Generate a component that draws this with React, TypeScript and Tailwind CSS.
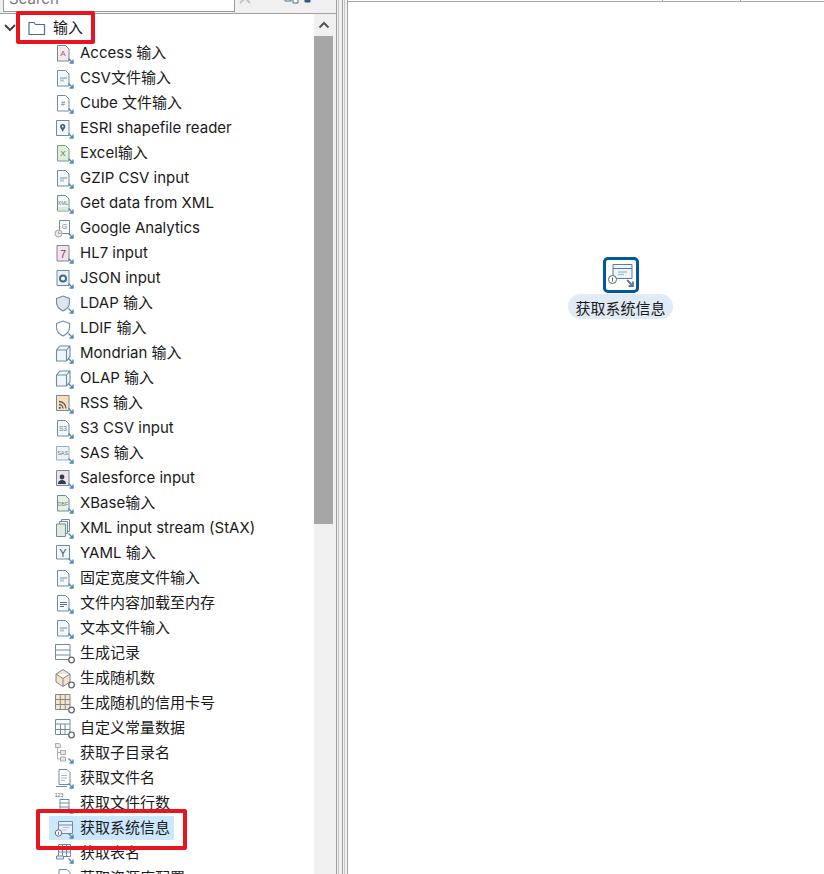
import React from 'react';

const STROKE = '#6f8ba3';

// little blue arrow that every step icon has in its corner
const Arrow = () => (
  <path d="M14.5 16.5l4.5 4.500m0-3.500v3.500h-3.500" fill="none" stroke="#4d86b0" strokeWidth="1.300" />
);

const Gear = () => (
  <circle cx="17.500" cy="18" r="2.800" fill="#fff" stroke="#667" strokeWidth="1.300" />
);

const Doc = ({ fill = '#fff', stroke = STROKE }: { fill?: string; stroke?: string }) => (
  <path d="M3.500 3.500h8l3.500 3.500v12h-11.500z" fill={fill} stroke={stroke} strokeWidth="1" />
);

const Letter = ({ t, x = 9, y = 14, size = 6, color = '#667788' }: { t: string; x?: number; y?: number; size?: number; color?: string }) => (
  <text x={x} y={y} fontSize={size} textAnchor="middle" fill={color} fontFamily="'Liberation Sans', sans-serif">
    {t}
  </text>
);

const Lines = () => (
  <path d="M6 11h7M6 13.500h4" stroke="#b4c2ce" strokeWidth="1.800" fill="none" />
);

const Shield = ({ fill }: { fill: string }) => (
  <path d="M2.500 6.500l6.500-2.500 6.500 2.500v4c0 4.500-3.500 7-6.500 8.500-3-1.500-6.500-4-6.500-8.500z" fill={fill} stroke={STROKE} strokeWidth="1.100" />
);

const Cube = () => (
  <path d="M2.500 8l3.500-4h10v10.500l-3.500 4.500h-10zM2.500 8h10v11M12.500 8l3.500-4" fill="#eef6fc" stroke={STROKE} strokeWidth="1.100" />
);

const icons: Record<string, React.ReactNode> = {
  access: <><Doc fill="#fbe6ec" /><Letter t="A" y={14} size={8} /><Arrow /></>,
  csv: <><Doc fill="#f4f8fb" /><Lines /><Arrow /></>,
  cube: <><Doc /><Letter t="#" size={8} /><Arrow /></>,
  esri: <><path d="M2.500 3.500h12.500v15h-12.500z" fill="#f4f8fb" stroke={STROKE} /><circle cx="8.700" cy="9.500" r="2.600" fill="#3f5f7d" /><path d="M6.800 11l1.900 4 1.900-4z" fill="#3f5f7d" /><circle cx="8.700" cy="9.500" r="0.900" fill="#fff" /><Arrow /></>,
  excel: <><Doc fill="#dfefd9" stroke="#7d9c86" /><Letter t="X" size={8} color="#55785c" /><Arrow /></>,
  xml: <><Doc fill="#f2f8f0" /><path d="M4 15h10.500v3.500h-10.500z" fill="#d8ebd0" /><Letter t="XML" size={5} y={13} /><Arrow /></>,
  google: <><path d="M5.500 3.500h10v13h-10z" fill="#fff" stroke={STROKE} /><Letter t="G" x={10.500} y={11.500} size={7} /><circle cx="4.500" cy="16.500" r="3.500" fill="#f7e4da" stroke="#98a4ae" /><path d="M4.500 14.500v2h2" stroke="#98a4ae" fill="none" /><Arrow /></>,
  hl7: <><path d="M3 3.500h12v15.500h-12z" fill="#fae0e8" stroke={STROKE} /><Letter t="7" y={15.500} size={11} color="#556" /><Arrow /></>,
  json: <><path d="M3 3.500h12v15h-12z" fill="#e6f1f9" stroke={STROKE} /><circle cx="9" cy="11.500" r="3" fill="#fff" stroke="#4a6782" strokeWidth="2" /><Arrow /></>,
  ldap: <><Shield fill="#dfe5ea" /><Arrow /></>,
  ldif: <><Shield fill="#fff" /><Arrow /></>,
  cubeBox: <><Cube /><Arrow /></>,
  rss: <><path d="M2.500 3.500h12.500v15h-12.500z" fill="#fadfb8" stroke={STROKE} /><path d="M5 9.500a7 7 0 0 1 7 7M5 12.500a4 4 0 0 1 4 4" fill="none" stroke="#55606c" strokeWidth="1.300" /><circle cx="5.800" cy="15.800" r="1.100" fill="#55606c" /><Arrow /></>,
  s3: <><Doc fill="#f4f8fb" /><Letter t="S3" size={6.500} /><Arrow /></>,
  sas: <><path d="M2.500 4.500h12.500v13.500h-12.500z" fill="#eef3f8" stroke="#9db0c0" /><Letter t="SAS" x={8.700} size={5.500} y={13} /><Arrow /></>,
  sales: <><path d="M2.500 3.500h12.500v15h-12.500z" fill="#f0e2e8" stroke={STROKE} /><circle cx="8" cy="10" r="2.400" fill="#333f4c" /><path d="M4 17c0-3 1.800-4 4-4s4 1 4 4z" fill="#333f4c" /><Arrow /></>,
  xbase: <><Doc fill="#e6f2e1" /><Letter t="DBF" size={5} /><Arrow /></>,
  stax: <><path d="M7.500 2.500h8v12h-8z" fill="#eef4ea" stroke={STROKE} /><path d="M5.500 4.500h8v12h-8z" fill="#eef4ea" stroke={STROKE} /><path d="M2.500 7h9v12.500h-9z" fill="#dfecd8" stroke={STROKE} /><Arrow /></>,
  yaml: <><path d="M2.500 3.500h13v13.500h-13z" fill="#f2f7fb" stroke={STROKE} /><Letter t="Y" y={15} size={11} color="#44586a" /><Arrow /></>,
  fixed: <><Doc fill="#f4f8fb" /><Lines /><Arrow /></>,
  mem: <><Doc fill="#f4f8fb" /><path d="M6 10.500h7M6 12.500h7M6 14.500h4" stroke="#5a6f82" strokeWidth="1.100" /><Arrow /></>,
  rows: <><path d="M1.500 2.500h14.500v15h-14.500zM1.500 8h14.500M1.500 13h14.500" fill="#fff" stroke={STROKE} /><Gear /></>,
  random: <><path d="M2 7l7-4.500 7 4.500v8l-7 4.500-7-4.500zM2 7l7 4.500 7-4.500M9 11.500v8" fill="#f6e2c6" stroke="#7d8a96" /><Gear /></>,
  card: <><path d="M1.500 2.500h14.500v15h-14.500zM1.500 7.500h14.500M1.500 12.500h14.500M6.300 2.500v15M11.200 2.500v15" fill="#f9e5c8" stroke="#7d8a96" /><Gear /></>,
  table: <><path d="M1.500 2.500h14.500v15h-14.500zM1.500 7h14.500M1.500 12.500h14.500M6.500 7v10.500M11 7v10.500" fill="#fff" stroke={STROKE} /><Gear /></>,
  folders: <><path d="M1.500 1.500h4l1 1.500v2.500h-5zM6.500 8.500h5v4h-5zM6.500 15h5v4h-5z" fill="#f8e8c8" stroke="#98a6b2" strokeWidth="0.900" /><path d="M3.500 5.500v11.500h3M3.500 10.500h3" stroke="#98a6b2" fill="none" strokeWidth="0.900" /><Arrow /></>,
  file: <><path d="M5 2.500h8l3 3v12h-11z" fill="#fff" stroke={STROKE} /><path d="M7 8.500h6M7 11h6M7 13.500h4" stroke="#a9b8c5" /><path d="M2 19.500h11" stroke={STROKE} /><Arrow /></>,
  lines: <><Letter t="123" x={5} y={5} size={5} color="#556" /><path d="M6 7.500h9v11.500h-9zM6 11h9M6 15h9" fill="#fff" stroke={STROKE} /><Arrow /></>,
  sys: <><path d="M4.500 4.500h14v12h-14zM4.500 8h14" fill="#e9f2f9" stroke={STROKE} /><path d="M8.500 10.500h7M8.500 13h4" stroke="#b4c2ce" strokeWidth="1.200" /><circle cx="4.500" cy="16" r="3.200" fill="#fff" stroke="#667" /><path d="M4.500 14.800v2.800" stroke="#667" /><Arrow /></>,
  tables: <><path d="M4.500 2.500h12v12h-12zM4.500 6h12M4.500 10h12M8.500 2.500v12M12.500 2.500v12" fill="#fff" stroke={STROKE} /><path d="M2.500 14h7v3h-7z" fill="#e8eef4" stroke={STROKE} /><Arrow /></>,
};

const StepIcon = ({ kind }: { kind: string }) => (
  <svg width="22" height="22" viewBox="0 0 22 22" className="shrink-0">
    {icons[kind]}
  </svg>
);

const steps: [string, string][] = [
  ['access', 'Access 输入'],
  ['csv', 'CSV文件输入'],
  ['cube', 'Cube 文件输入'],
  ['esri', 'ESRI shapefile reader'],
  ['excel', 'Excel输入'],
  ['csv', 'GZIP CSV input'],
  ['xml', 'Get data from XML'],
  ['google', 'Google Analytics'],
  ['hl7', 'HL7 input'],
  ['json', 'JSON input'],
  ['ldap', 'LDAP 输入'],
  ['ldif', 'LDIF 输入'],
  ['cubeBox', 'Mondrian 输入'],
  ['cubeBox', 'OLAP 输入'],
  ['rss', 'RSS 输入'],
  ['s3', 'S3 CSV input'],
  ['sas', 'SAS 输入'],
  ['sales', 'Salesforce input'],
  ['xbase', 'XBase输入'],
  ['stax', 'XML input stream (StAX)'],
  ['yaml', 'YAML 输入'],
  ['fixed', '固定宽度文件输入'],
  ['mem', '文件内容加载至内存'],
  ['fixed', '文本文件输入'],
  ['rows', '生成记录'],
  ['random', '生成随机数'],
  ['card', '生成随机的信用卡号'],
  ['table', '自定义常量数据'],
  ['folders', '获取子目录名'],
  ['file', '获取文件名'],
  ['lines', '获取文件行数'],
  ['sys', '获取系统信息'],
  ['tables', '获取表名'],
  ['file', '获取资源库配置'],
];

const App = () => {
  return (
    <div
      className="relative flex h-[874px] w-[824px] overflow-hidden bg-white text-[15px] text-[#1a1a1a]"
      style={{ fontFamily: "Inter, 'Noto Sans CJK SC', sans-serif" }}
    >
      {/* left palette */}
      <div className="flex h-full w-[336px] shrink-0 flex-col">
        <div className="flex h-[14px] shrink-0 items-end overflow-hidden border-b border-[#a0a0a0] bg-[#f0f0f0] pb-[1px] pl-[3px]">
          <div className="flex h-[26px] w-[232px] shrink-0 items-center border border-[#9a9a9a] bg-white pl-[5px] text-[15px] text-[#777]">
            Search
          </div>
          <svg width="14" height="5" viewBox="0 0 14 5" className="mb-[8px] ml-[4px] shrink-0">
            <path d="M1 -6l10 10M11 -6l-10 10" stroke="#c4c4c4" strokeWidth="2" />
          </svg>
          <svg width="16" height="5" viewBox="0 0 16 5" className="mb-[8px] ml-[31px] shrink-0">
            <path d="M1 -4h6v6h-6zM9 -3h5v7h-5z" fill="#fff" stroke="#44708f" />
          </svg>
          <svg width="16" height="5" viewBox="0 0 16 5" className="mb-[8px] ml-[4px] shrink-0">
            <path d="M1 -4h5v7h-5z" fill="#2f5d84" stroke="#2f5d84" />
            <path d="M9 0h6" stroke="#2f5d84" strokeWidth="2" />
          </svg>
        </div>
        <div className="flex min-h-0 flex-1">
          <div className="min-w-0 flex-1 overflow-hidden pt-[1px]">
            <div className="flex h-[25px] items-center">
              <svg width="12" height="8" viewBox="0 0 12 8" className="ml-[4px] shrink-0">
                <path d="M1 1l5 5 5-5" fill="none" stroke="#444" strokeWidth="2" />
              </svg>
              <svg width="18" height="14" viewBox="0 0 18 14" className="ml-[12px] shrink-0">
                <path d="M1 1.500h5l1.500 2h9v10h-15.500z" fill="#fff" stroke="#4d6f8c" strokeWidth="1.200" />
              </svg>
              <span className="ml-[7px] pt-[2px]">输入</span>
            </div>
            {steps.map(([kind, label]) => {
              const selected = label === '获取系统信息';
              return (
                <div key={label} className="flex h-[25px] items-center pl-[49px]">
                  <div className={`flex h-[24px] items-center pl-[5px] pr-[4px] ${selected ? 'bg-[#cce8ff]' : ''}`}>
                    <StepIcon kind={kind} />
                    <span className="ml-[4px] whitespace-nowrap pt-[2px]">{label}</span>
                  </div>
                </div>
              );
            })}
          </div>
          {/* scrollbar */}
          <div className="flex h-full w-[22px] shrink-0 flex-col bg-[#f0f0f0] pr-[3px]">
            <div className="flex h-[22px] shrink-0 items-center justify-center">
              <svg width="12" height="8" viewBox="0 0 12 8">
                <path d="M1.500 6.500l4.500-4.500 4.500 4.500" fill="none" stroke="#555" strokeWidth="2" />
              </svg>
            </div>
            <div className="h-[488px] shrink-0 bg-[#a6a6a6]" />
          </div>
        </div>
      </div>

      {/* sash between palette and canvas */}
      <div className="flex h-full shrink-0">
        <div className="h-full w-[1px] bg-[#a0a0a0]" />
        <div className="h-full w-[1px] bg-[#f0f0f0]" />
        <div className="h-full w-[1px] bg-[#c8c8c8]" />
        <div className="h-full w-[3px] bg-[#f0f0f0]" />
        <div className="h-full w-[1px] bg-[#a0a0a0]" />
        <div className="h-full w-[1px] bg-[#f0f0f0]" />
        <div className="h-full w-[1px] bg-[#c8c8c8]" />
        <div className="h-full w-[2px] bg-[#f0f0f0]" />
        <div className="h-full w-[1px] bg-[#a0a0a0]" />
      </div>

      {/* canvas */}
      <div className="relative min-w-0 flex-1 bg-white">
        <div className="h-[2px] border-b border-[#a8a8a8]" />
        <div className="absolute left-[314px] top-0 h-[1px] w-[1px] bg-[#a8a8a8]" />
        <div className="absolute left-[392px] top-0 h-[1px] w-[1px] bg-[#a8a8a8]" />
        <div className="absolute left-[220px] top-[257px] flex w-[105px] flex-col items-center">
          <div className="flex h-[36px] w-[36px] items-center justify-center rounded-[5px] border-[3px] border-[#00589f] bg-white">
            <svg width="30" height="30" viewBox="0 0 30 30">
              <path d="M7 4.500h19v14h-19zM7 8.500h19" fill="#edf4fa" stroke="#5a7a96" />
              <path d="M12 12h9M12 14.500h6" stroke="#b4c2ce" strokeWidth="1.500" />
              <circle cx="6.500" cy="19.500" r="4" fill="#fff" stroke="#56626e" />
              <path d="M6.500 17.500v4" stroke="#56626e" />
              <path d="M21 20l6 6m0-4.500v4.500h-4.500" fill="none" stroke="#5a7a96" strokeWidth="1.800" />
            </svg>
          </div>
          <div className="mt-[1px] flex h-[25px] w-full items-center justify-center rounded-full bg-[#e1ebf5] pt-[5px]">
            获取系统信息
          </div>
        </div>
      </div>

      {/* red annotation boxes drawn on the screenshot */}
      <div className="absolute left-[16px] top-[11px] h-[33px] w-[79px] rounded-[2px] border-[4px] border-[#e8141f]" />
      <div className="absolute left-[36px] top-[809px] h-[41px] w-[151px] rounded-[2px] border-[4px] border-[#e8141f]" />
    </div>
  );
};

export default App;
